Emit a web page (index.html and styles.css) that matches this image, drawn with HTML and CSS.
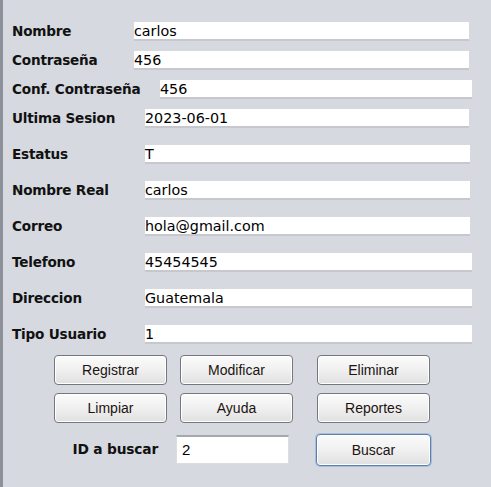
FILE: index.html
```html
<!DOCTYPE html>
<html>
<head>
<meta charset="utf-8">
<link rel="stylesheet" href="styles.css">
</head>
<body>
<div class="window">
  <div class="form">
    <div class="group g1">
      <div class="row"><span class="label l-a">Nombre</span><span class="field">carlos</span></div>
      <div class="row"><span class="label l-a">Contraseña</span><span class="field">456</span></div>
      <div class="row wide"><span class="label l-b">Conf. Contraseña</span><span class="field">456</span></div>
      <div class="row"><span class="label l-c">Ultima Sesion</span><span class="field">2023-06-01</span></div>
    </div>
    <div class="group g2">
      <div class="row mid"><span class="label l-c">Estatus</span><span class="field">T</span></div>
      <div class="row mid"><span class="label l-c">Nombre Real</span><span class="field">carlos</span></div>
      <div class="row mid"><span class="label l-c">Correo</span><span class="field">hola@gmail.com</span></div>
      <div class="row wide"><span class="label l-c">Telefono</span><span class="field">45454545</span></div>
      <div class="row wide"><span class="label l-c">Direccion</span><span class="field">Guatemala</span></div>
      <div class="row wide"><span class="label l-c">Tipo Usuario</span><span class="field">1</span></div>
    </div>
    <div class="buttons">
      <button class="btn c1">Registrar</button>
      <button class="btn c2">Modificar</button>
      <button class="btn c3">Eliminar</button>
      <button class="btn c1">Limpiar</button>
      <button class="btn c2">Ayuda</button>
      <button class="btn c3">Reportes</button>
      <span class="search-label c1">ID a buscar</span>
      <span class="search-field c2">2</span>
      <button class="btn focus c3">Buscar</button>
    </div>
  </div>
</div>
</body>
</html>
```
FILE: styles.css
```css
html, body {
  margin: 0;
  padding: 0;
  background: #d6d9e0;
}
.window {
  width: 488px;
  height: 487px;
  border-left: 3px solid #8c9098;
  box-sizing: border-box;
  background: #d6d9e0;
}
.form {
  padding: 22px 0 0 9px;
  width: 460px;
}
.group {
  display: flex;
  flex-direction: column;
}
.g1 { gap: 10px; }
.g2 { gap: 17px; margin-top: 17px; }
.row {
  display: flex;
  align-items: stretch;
  height: 19px;
}
.label {
  flex: none;
  font-family: "DejaVu Sans", sans-serif;
  font-weight: bold;
  font-size: 13.6px;
  letter-spacing: -0.2px;
  color: #111;
  line-height: 19px;
}
.l-a { width: 122px; }
.l-b { width: 148px; }
.l-c { width: 133px; }
.field {
  flex: 1;
  background: #fff;
  border-bottom: 2px solid #c6c8cd;
  font-family: "DejaVu Sans", sans-serif;
  font-size: 14.3px;
  color: #000;
  line-height: 18px;
  margin-right: 3px;
  white-space: nowrap;
}
.row.wide .field { margin-right: 0; }
.row.mid .field { margin-right: 2px; }
.buttons {
  display: grid;
  grid-template-columns: 113px 13px 113px 24px 113px;
  grid-auto-rows: 30px;
  row-gap: 8px;
  margin-top: 11px;
  margin-left: 42px;
}
.c1 { grid-column: 1; }
.c2 { grid-column: 3; }
.c3 { grid-column: 5; }
.btn {
  font-family: "Liberation Sans", Arial, sans-serif;
  font-size: 14px;
  color: #1b1410;
  border: 1px solid #74777d;
  border-radius: 4px;
  background: linear-gradient(#fbfbfb 0%, #f0f0f0 50%, #e0e0e1 100%);
  box-shadow: inset 0 0 0 1px #ffffff;
  padding: 0;
  margin: 0;
}
.buttons .search-label,
.buttons .search-field { margin-top: 4px; }
.focus {
  border: 1px solid #5d7fab;
  box-shadow: 0 0 0 1px #a8bfdc, inset 0 0 0 1px #ffffff;
  margin-left: -1px;
  margin-right: -1px;
  height: 32px;
  margin-top: 3px;
}
.search-label {
  font-family: "DejaVu Sans", sans-serif;
  font-weight: bold;
  font-size: 13.8px;
  letter-spacing: -0.2px;
  color: #111;
  line-height: 29px;
  text-align: right;
  margin-right: 9px;
}
.search-field {
  margin-left: -4px;
  margin-right: 4px;
  height: 29px;
  box-sizing: border-box;
  background: #fff;
  border-top: 2px solid #a6a8ac;
  border-left: 1px solid #dcdde0;
  border-right: 1px solid #dcdde0;
  border-bottom: 1px solid #dcdde0;
  font-family: "Liberation Sans", Arial, sans-serif;
  font-size: 15px;
  line-height: 26px;
  padding-left: 5px;
  color: #000;
}
```
